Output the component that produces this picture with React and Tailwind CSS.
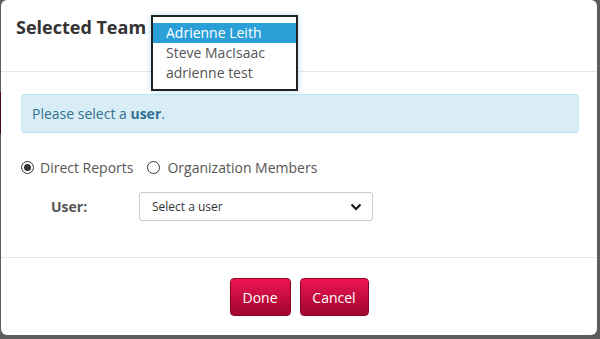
import React from "react";

const App = () => {
  return (
    <div className="flex h-[339px] w-[600px] bg-[#5c5c5c] font-['Open_Sans',sans-serif]">
      {/* left strip of the page behind */}
      <div className="flex w-px flex-col">
        <div className="h-[92px]"></div>
        <div className="h-[42px] bg-[#4a0a1e]"></div>
      </div>
      {/* modal */}
      <div className="relative mb-[4px] mr-[3px] flex flex-1 flex-col rounded-md bg-white">
        <div className="flex h-[72px] items-center border-b border-[#e5e5e5] pl-[15px] pb-[16px]">
          <h4 className="text-[18px] font-bold text-[#333]">Selected Team</h4>
        </div>

        {/* open listbox */}
        <div className="absolute left-[150px] top-[15px] w-[147px] border-2 border-[#222] bg-white py-[6px] text-[14px] leading-[20px] text-[#555] shadow-[0_0_6px_rgba(45,159,217,0.35)]">
          <div className="bg-[#2a9fd8] pl-[13px] text-white">Adrienne Leith</div>
          <div className="pl-[13px]">Steve MacIsaac</div>
          <div className="pl-[13px]">adrienne test</div>
        </div>

        <div className="flex flex-1 flex-col pl-[20px] pr-[18px] pt-[22px]">
          <div className="flex h-[39px] items-center rounded-[3px] border border-[#bce8f1] bg-[#d9edf7] px-[10px] text-[14px] text-[#31708f]">
            <span>
              Please select a <b>user</b>.
            </span>
          </div>

          <div className="mt-[24px] flex items-center text-[14px] text-[#555]">
            <span className="flex h-[13px] w-[13px] items-center justify-center rounded-full border border-[#333]">
              <span className="h-[7px] w-[7px] rounded-full bg-[#333]"></span>
            </span>
            <span className="ml-[6px]">Direct Reports</span>
            <span className="ml-[14px] h-[13px] w-[13px] rounded-full border border-[#333]"></span>
            <span className="ml-[7px]">Organization Members</span>
          </div>

          <div className="mt-[14px] flex items-center">
            <span className="w-[118px] pl-[30px] text-[14px] font-bold text-[#555]">User:</span>
            <div className="flex h-[29px] w-[234px] items-center justify-between rounded-[3px] border border-[#ccc] bg-white pl-[12px] pr-[10px] text-[12px] text-[#333]">
              <span>Select a user</span>
              <svg width="12" height="8" viewBox="0 0 12 8" fill="none">
                <path d="M1.5 1.5 L6 6 L10.5 1.5" stroke="#111" strokeWidth="2" />
              </svg>
            </div>
          </div>
        </div>

        <div className="flex h-[78px] items-center justify-center gap-[9px] border-t border-[#e5e5e5] pt-[1px]">
          <button className="h-[38px] w-[61px] rounded-[4px] border border-[#8c0528] bg-gradient-to-b from-[#ee1552] to-[#a0062f] text-[14px] text-white">
            Done
          </button>
          <button className="h-[38px] w-[69px] rounded-[4px] border border-[#8c0528] bg-gradient-to-b from-[#ee1552] to-[#a0062f] text-[14px] text-white">
            Cancel
          </button>
        </div>
      </div>
    </div>
  );
};

export default App;
